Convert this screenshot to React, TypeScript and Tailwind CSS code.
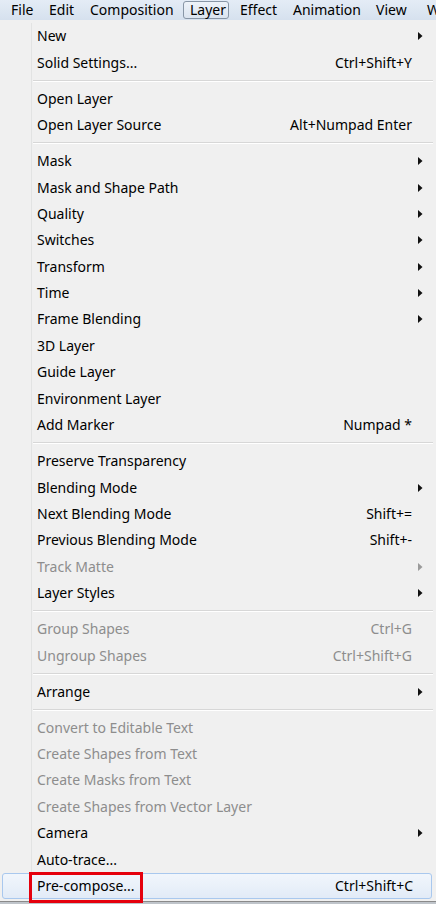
import React from 'react';

type Row =
  | { kind: 'sep' }
  | { kind: 'item'; label: string; shortcut?: string; sub?: boolean; disabled?: boolean; active?: boolean };

const menuBar = [
  { label: 'File', w: 'w-[38px]' },
  { label: 'Edit', w: 'w-[41px]' },
  { label: 'Composition', w: 'w-[100px]' },
  { label: 'Layer', w: 'w-[46px] mr-[4px]', open: true },
  { label: 'Effect', w: 'w-[53px]' },
  { label: 'Animation', w: 'w-[83px]' },
  { label: 'View', w: 'w-[51px]' },
  { label: 'Window', w: 'w-[70px]' },
];

const rows: Row[] = [
  { kind: 'item', label: 'New', sub: true },
  { kind: 'item', label: 'Solid Settings...', shortcut: 'Ctrl+Shift+Y' },
  { kind: 'sep' },
  { kind: 'item', label: 'Open Layer' },
  { kind: 'item', label: 'Open Layer Source', shortcut: 'Alt+Numpad Enter' },
  { kind: 'sep' },
  { kind: 'item', label: 'Mask', sub: true },
  { kind: 'item', label: 'Mask and Shape Path', sub: true },
  { kind: 'item', label: 'Quality', sub: true },
  { kind: 'item', label: 'Switches', sub: true },
  { kind: 'item', label: 'Transform', sub: true },
  { kind: 'item', label: 'Time', sub: true },
  { kind: 'item', label: 'Frame Blending', sub: true },
  { kind: 'item', label: '3D Layer' },
  { kind: 'item', label: 'Guide Layer' },
  { kind: 'item', label: 'Environment Layer' },
  { kind: 'item', label: 'Add Marker', shortcut: 'Numpad *' },
  { kind: 'sep' },
  { kind: 'item', label: 'Preserve Transparency' },
  { kind: 'item', label: 'Blending Mode', sub: true },
  { kind: 'item', label: 'Next Blending Mode', shortcut: 'Shift+=' },
  { kind: 'item', label: 'Previous Blending Mode', shortcut: 'Shift+-' },
  { kind: 'item', label: 'Track Matte', sub: true, disabled: true },
  { kind: 'item', label: 'Layer Styles', sub: true },
  { kind: 'sep' },
  { kind: 'item', label: 'Group Shapes', shortcut: 'Ctrl+G', disabled: true },
  { kind: 'item', label: 'Ungroup Shapes', shortcut: 'Ctrl+Shift+G', disabled: true },
  { kind: 'sep' },
  { kind: 'item', label: 'Arrange', sub: true },
  { kind: 'sep' },
  { kind: 'item', label: 'Convert to Editable Text', disabled: true },
  { kind: 'item', label: 'Create Shapes from Text', disabled: true },
  { kind: 'item', label: 'Create Masks from Text', disabled: true },
  { kind: 'item', label: 'Create Shapes from Vector Layer', disabled: true },
  { kind: 'item', label: 'Camera', sub: true },
  { kind: 'item', label: 'Auto-trace...' },
  { kind: 'item', label: 'Pre-compose...', shortcut: 'Ctrl+Shift+C', active: true },
];

const Arrow = ({ disabled }: { disabled?: boolean }) => (
  <svg width="5" height="8" viewBox="0 0 5 8" className="block">
    <path d="M0 0 L4.5 4 L0 8 Z" fill={disabled ? '#9a9a9a' : '#111'} />
  </svg>
);

const App = () => {
  return (
    <div className="w-[436px] h-[904px] overflow-hidden bg-[#bfc4ca] font-['Noto_Sans','Open_Sans',sans-serif] text-[14px] leading-none text-black">
      {/* menu bar */}
      <div className="h-[20px] flex items-stretch pl-[4px] bg-gradient-to-b from-[#e4ecf6] to-[#d6e1ee] whitespace-nowrap overflow-hidden">
        {menuBar.map((m) => (
          <div
            key={m.label}
            className={`${m.w} shrink-0 flex items-center ${
              m.open
                ? 'mt-[1px] mb-[1px] rounded-[3px] border border-[#8896a6] bg-gradient-to-b from-[#eef3f9] to-[#dbe4ef] pl-[6px]'
                : 'pl-[7px]'
            }`}
          >
            {m.label}
          </div>
        ))}
      </div>

      {/* dropdown */}
      <div className="bg-[#f0f0f0] pt-[3px] pb-[2px] border-b border-[#8a8a8a]">
        {rows.map((r, i) =>
          r.kind === 'sep' ? (
            <div key={i} className="h-[9.7px] flex">
              <div className="w-[32px] border-r border-[#e2e3e3]" />
              <div className="flex-1 flex flex-col justify-center pl-[1px] pr-[3px]">
                <div className="h-px bg-[#d7d7d7]" />
                <div className="h-px bg-white" />
              </div>
            </div>
          ) : r.active ? (
            <div key={i} className="relative h-[26.4px] px-[2px] pr-[4px]">
              <div className="h-full flex items-center rounded-[3px] border border-[#a9c8ee] bg-gradient-to-b from-[#f1f6fc] to-[#e2ebf7]">
                <div className="w-[29px] shrink-0" />
                <div className="flex-1 pl-[5px]">{r.label}</div>
                <div className="pr-[18px]">{r.shortcut}</div>
              </div>
              <div className="absolute left-[29px] top-[-1px] w-[114px] h-[31px] border-[3px] border-[#e5000d]" />
            </div>
          ) : (
            <div key={i} className={`h-[26.4px] flex items-stretch ${r.disabled ? 'text-[#8d8d8d]' : ''}`}>
              <div className="w-[32px] shrink-0 border-r border-[#e2e3e3]" />
              <div className="flex-1 flex items-center pl-[5px]">{r.label}</div>
              <div className="flex items-center">{r.shortcut}</div>
              <div className="w-[24px] shrink-0 flex items-center pl-[6px]">{r.sub && <Arrow disabled={r.disabled} />}</div>
            </div>
          ),
        )}
      </div>
    </div>
  );
};

export default App;
